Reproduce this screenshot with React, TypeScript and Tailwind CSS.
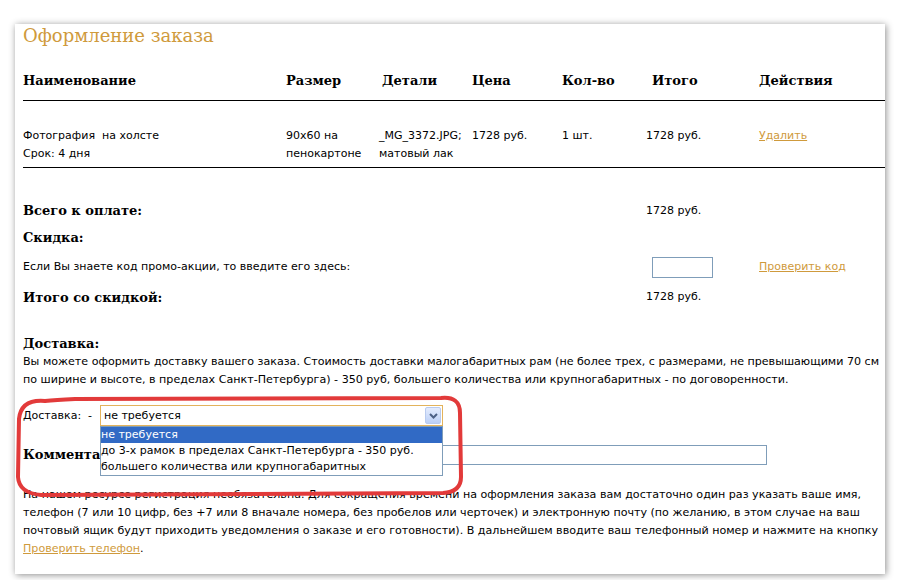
import React from 'react'

const gold = 'text-[#cf9a3c]'
const serif = "font-['DejaVu_Serif',serif]"
const cols = 'grid grid-cols-[263px_93px_93px_90px_84px_113px_1fr]'

export default function App() {
  return (
    <div className="min-h-screen bg-white p-[15px] font-['DejaVu_Sans',sans-serif] text-[11px] text-black">
      <div className="relative w-[870px] h-[550px] bg-white pl-[8px] pr-[2px] shadow-[1px_1px_7px_rgba(0,0,0,0.45)]">
        {/* Заголовок */}
        <h1 className={`mt-[9px] h-[24px] leading-[24px] text-[18px] ${serif} ${gold}`}>Оформление заказа</h1>

        {/* Таблица */}
        <div className={`${cols} mt-[13px] h-[40px] items-center border-b border-black -mr-[2px] ${serif} font-bold text-[13px]`}>
          <div>Наименование</div>
          <div>Размер</div>
          <div className="pl-[3px]">Детали</div>
          <div>Цена</div>
          <div>Кол-во</div>
          <div className="pl-[6px]">Итого</div>
          <div>Действия</div>
        </div>
        <div className={`${cols} h-[67px] pt-[26px] border-b border-black -mr-[2px] leading-[18px]`}>
          <div>Фотография&nbsp; на холсте<br />Срок: 4 дня</div>
          <div>90x60 на<br />пенокартоне</div>
          <div>_MG_3372.JPG;<br />матовый лак</div>
          <div>1728 руб.</div>
          <div>1 шт.</div>
          <div>1728 руб.</div>
          <div><a href="#" className={`${gold} underline`}>Удалить</a></div>
        </div>

        {/* Итоги */}
        <div className="mt-[32px] grid grid-cols-[623px_113px_1fr] items-center">
          <div className={`h-[22px] flex items-center ${serif} font-bold text-[13px]`}>Всего к оплате:</div>
          <div>1728 руб.</div>
          <div />
          <div className={`h-[32px] flex items-center ${serif} font-bold text-[13px]`}>Скидка:</div>
          <div />
          <div />
          <div className="h-[26px] flex items-center">Если Вы знаете код промо-акции, то введите его здесь:</div>
          <div className="pl-[6px]">
            <input className="block w-[61px] h-[21px] border border-[#7f9db9] bg-white outline-none" />
          </div>
          <div><a href="#" className={`${gold} underline`}>Проверить код</a></div>
          <div className={`h-[35px] flex items-center ${serif} font-bold text-[13px]`}>Итого со скидкой:</div>
          <div>1728 руб.</div>
          <div />
        </div>

        {/* Доставка */}
        <div className={`mt-[20px] h-[18px] leading-[18px] ${serif} font-bold text-[13px]`}>Доставка:</div>
        <p className="leading-[18px] whitespace-nowrap text-[11.1px]">
          Вы можете оформить доставку вашего заказа. Стоимость доставки малогабаритных рам (не более трех, с размерами, не превышающими 70 см
          <br />
          по ширине и высоте, в пределах Санкт-Петербурга) - 350 руб, большего количества или крупногабаритных - по договоренности.
        </p>

        <div className="relative z-20 mt-[16px] h-[21px] flex items-center leading-[16px]">
          <span className="w-[77px]">Доставка:&nbsp; -</span>
          <div className="relative">
            <div className="w-[343px] h-[21px] border border-[#e3b35c] bg-white flex items-center justify-between pl-[3px] pr-[1px]">
              <span>не требуется</span>
              <span className="w-[16px] h-[17px] rounded-[2px] border border-[#b9cbef] bg-gradient-to-b from-[#e4ecfd] to-[#bcd0f7] flex items-center justify-center">
                <svg width="9" height="6" viewBox="0 0 9 6">
                  <path d="M1 1 L4.5 4.5 L8 1" fill="none" stroke="#4d6185" strokeWidth="2" />
                </svg>
              </span>
            </div>
            {/* Открытый список */}
            <ul className="absolute left-0 top-[21px] w-[343px] border border-[#7f9db9] bg-white whitespace-nowrap">
              <li className="bg-[#316ac5] text-white">не требуется</li>
              <li>до 3-х рамок в пределах Санкт-Петербурга - 350 руб.</li>
              <li>большего количества или крупногабаритных</li>
            </ul>
          </div>
        </div>

        <div className="mt-[19px] h-[20px] w-[744px] flex items-center gap-[8px]">
          <span className={`${serif} font-bold text-[13px]`}>Комментарий:</span>
          <input className="flex-1 h-[20px] border border-[#7f9db9] bg-white outline-none" />
        </div>

        <p className="mt-[21px] leading-[18px] whitespace-nowrap text-[11.1px]">
          На нашем ресурсе регистрация необязательна. Для сокращения времени на оформления заказа вам достаточно один раз указать ваше имя,
          <br />
          телефон (7 или 10 цифр, без +7 или 8 вначале номера, без пробелов или черточек) и электронную почту (по желанию, в этом случае на ваш
          <br />
          почтовый ящик будут приходить уведомления о заказе и его готовности). В дальнейшем вводите ваш телефонный номер и нажмите на кнопку
          <br />
          <a href="#" className={`${gold} underline`}>Проверить телефон</a>.
        </p>

        {/* Красная пометка */}
        <svg className="absolute left-0 top-[365px] z-30 pointer-events-none" width="470" height="125" viewBox="0 0 470 125">
          <path
            d="M30 12 Q6 10 4 30 L3 88 Q4 104 26 106 L428 104 Q446 103 446 88 L445 24 Q445 7 426 9 L60 10 Q40 11 30 12"
            fill="none"
            stroke="#e23a3a"
            strokeWidth="4"
            strokeLinecap="round"
          />
        </svg>
      </div>
    </div>
  )
}
